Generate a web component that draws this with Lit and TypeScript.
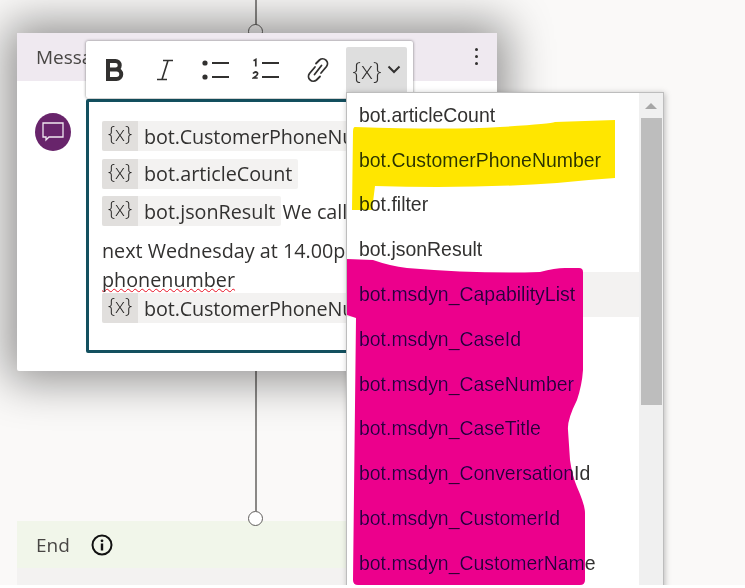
import { LitElement, html, css, svg } from "lit";
import { customElement } from "lit/decorators.js";

const VARS = [
  "bot.articleCount",
  "bot.CustomerPhoneNumber",
  "bot.filter",
  "bot.jsonResult",
  "bot.msdyn_CapabilityList",
  "bot.msdyn_CaseId",
  "bot.msdyn_CaseNumber",
  "bot.msdyn_CaseTitle",
  "bot.msdyn_ConversationId",
  "bot.msdyn_CustomerId",
  "bot.msdyn_CustomerName",
];

/* editor token: {x} tag plus variable name */
const chip = (name: string, tight = false) => html`<span class="chip"
  ><span class="tag">{x}</span><span class="name ${tight ? "tight" : ""}">${name}</span></span
>`;

const boldIcon = svg`<svg width="20" height="24" viewBox="0 0 20 24">
  <path fill="none" stroke="#323130" stroke-width="4" stroke-linejoin="miter" d="M3 3h7.500a4 4 0 0 1 0 8.500H3zM3 11.500h8.500a4.700 4.700 0 0 1 0 9.500H3z"/>
</svg>`;

const italicIcon = svg`<svg width="22" height="24" viewBox="0 0 22 24">
  <path fill="none" stroke="#323130" stroke-width="1.600" d="M10 2.500h10M4 21.500h10M15 2.500 9 21.500"/>
</svg>`;

const bulletIcon = svg`<svg width="28" height="22" viewBox="0 0 28 22">
  <circle cx="3" cy="4" r="2.600" fill="#323130"/>
  <circle cx="3" cy="18" r="2.600" fill="#323130"/>
  <path stroke="#323130" stroke-width="2" d="M10 4h17M10 18h17"/>
</svg>`;

const numberIcon = svg`<svg width="28" height="24" viewBox="0 0 28 24">
  <path fill="none" stroke="#323130" stroke-width="1.700" d="M1.500 2.800 3.800 1.500v7M1 15.500q2.500-2.500 4.200-.8t-3.800 5.300h4.300"/>
  <path stroke="#323130" stroke-width="2" d="M10 5h17M10 19h17"/>
</svg>`;

const linkIcon = svg`<svg width="24" height="26" viewBox="0 0 24 26">
  <g fill="none" stroke="#323130" stroke-width="1.800" stroke-linecap="round">
    <path d="M10 6.500 13.500 3a4.800 4.800 0 0 1 7 6.500l-5.500 6.500"/>
    <path d="M14 19.500 10.500 23a4.800 4.800 0 0 1-7-6.500l5.500-6.500"/>
    <path d="M8.500 17.500 15.500 8.500"/>
  </g>
</svg>`;

@customElement("app-root")
export class AppRoot extends LitElement {
  static styles = css`
    :host {
      display: block;
      width: 745px;
      height: 588px;
      background: #fff;
    }

    .canvas {
      position: relative;
      width: 745px;
      height: 585px;
      overflow: hidden;
      background: #faf9f8;
      font-family: "Open Sans", sans-serif;
      color: #323130;
      isolation: isolate;
    }

    /* connectors */
    .line {
      position: absolute;
      left: 255px;
      width: 2px;
      background: #8a8886;
    }
    .dot {
      position: absolute;
      left: 248px;
      width: 15px;
      height: 15px;
      box-sizing: border-box;
      border: 1px solid #605e5c;
      border-radius: 50%;
      background: #fff;
    }
    .dot.open {
      background: transparent;
    }

    /* message node */
    .card {
      position: absolute;
      left: 17px;
      top: 33px;
      width: 480px;
      height: 338px;
      display: flex;
      flex-direction: column;
      background: #fff;
      border-radius: 2px;
      box-shadow: 0 0 45px 10px rgba(0, 0, 0, 0.42);
    }
    .card-head {
      height: 48px;
      flex: none;
      display: flex;
      align-items: center;
      justify-content: space-between;
      padding: 0 19px 0 19px;
      background: #efe9f0;
      font-size: 19px;
      color: #484644;
    }
    .more {
      display: flex;
      flex-direction: column;
      gap: 4px;
      margin-top: -2px;
    }
    .more i {
      width: 3px;
      height: 3px;
      border-radius: 50%;
      background: #323130;
    }
    .card-body {
      display: flex;
      align-items: flex-start;
      gap: 15px;
      padding: 18px 21px 18px 18px;
      flex: 1;
    }
    .avatar {
      width: 36px;
      height: 38px;
      margin-top: 14px;
      border-radius: 50%;
      background: #68246b;
      flex: none;
      display: flex;
      align-items: center;
      justify-content: center;
    }
    .editor {
      flex: 1;
      height: 254px;
      box-sizing: border-box;
      border: 3px solid #13505f;
      border-radius: 2px;
      padding: 19px 12px 0 13px;
      font-size: 19.750px;
      white-space: nowrap;
      overflow: hidden;
    }
    .row {
      display: flex;
      align-items: center;
      height: 30px;
      margin-bottom: 7.500px;
    }
    .row.text {
      margin-bottom: 0;
    }
    .after {
      margin-left: 1px;
    }
    .chip {
      display: inline-flex;
      height: 30px;
      align-items: center;
      background: #f3f2f1;
      border-radius: 2px;
      padding-right: 6px;
    }
    .name.tight {
      letter-spacing: -0.120px;
    }
    .tag {
      width: 36px;
      height: 30px;
      display: flex;
      align-items: center;
      justify-content: center;
      background: #e1dfdd;
      border-radius: 2px 0 0 2px;
      margin-right: 6px;
      font-size: 20px;
      font-weight: 300;
      color: #201f1e;
      padding-bottom: 5px;
      box-sizing: border-box;
    }
    .squiggle {
      text-decoration: underline wavy #e81123 1.400px;
      text-decoration-skip-ink: none;
      text-underline-offset: 1px;
    }

    /* rich text toolbar */
    .toolbar {
      position: absolute;
      left: 86px;
      top: 41px;
      width: 327px;
      height: 57px;
      box-sizing: border-box;
      display: flex;
      align-items: center;
      background: #fff;
      border-radius: 2px;
      box-shadow: 0 0 3px rgba(0, 0, 0, 0.5);
      padding: 0 6px 0 19px;
    }
    .tool {
      display: flex;
      align-items: center;
      justify-content: center;
    }
    .tool.b {
      width: 20px;
      margin-right: 28px;
    }
    .tool.i {
      width: 22px;
      margin-right: 27px;
    }
    .tool.ul {
      width: 28px;
      margin-right: 22px;
    }
    .tool.ol {
      width: 28px;
      margin-right: 26px;
    }
    .tool.link {
      width: 24px;
      margin-right: 16px;
    }
    .var-btn {
      width: 61px;
      height: 51px;
      align-self: flex-end;
      box-sizing: border-box;
      background: #dedede;
      border-radius: 2px 2px 0 0;
      display: flex;
      align-items: center;
      justify-content: center;
      gap: 6px;
      font-size: 24px;
      font-weight: 300;
      padding: 0 0 6px 1px;
    }

    /* variable picker */
    .menu {
      position: absolute;
      left: 346px;
      top: 92px;
      width: 318px;
      height: 500px;
      display: flex;
      background: #fff;
      border: 1px solid #bdbdbd;
      box-sizing: border-box;
      box-shadow: 1px 1px 6px rgba(0, 0, 0, 0.25);
      font-family: "Liberation Sans", Arial, sans-serif;
      overflow: hidden;
    }
    .list {
      flex: 1;
      min-width: 0;
    }
    .item {
      height: 44.800px;
      display: flex;
      align-items: center;
      padding-left: 12px;
      font-size: 19.450px;
      color: #323130;
    }
    .item.hover {
      background: #f3f2f1;
    }
    .scroll {
      width: 24px;
      flex: none;
      background: #f0f0f0;
      display: flex;
      flex-direction: column;
      align-items: center;
    }
    .arrow {
      margin-top: 10px;
      width: 0;
      height: 0;
      border-left: 6px solid transparent;
      border-right: 6px solid transparent;
      border-bottom: 6px solid #a6a6a6;
    }
    .thumb {
      width: 21px;
      height: 287px;
      margin-top: 9px;
      background: #bdbdbd;
    }

    /* end node */
    .end {
      position: absolute;
      left: 17px;
      top: 521px;
      width: 480px;
      height: 64px;
      display: flex;
      flex-direction: column;
      background: #f3f2f1;
    }
    .end-head {
      height: 47px;
      display: flex;
      align-items: center;
      gap: 21px;
      padding-left: 19px;
      background: #f1f6ea;
      font-size: 19px;
      color: #484644;
    }

    /* marker strokes drawn over the screenshot */
    .marker {
      position: absolute;
      left: 0;
      top: 0;
      mix-blend-mode: darken;
      pointer-events: none;
    }
  `;

  render() {
    return html`
      <div class="canvas">
        <div class="line" style="top:0;height:25px"></div>
        <div class="dot open" style="top:24px"></div>
        <div class="line" style="top:371px;height:140px"></div>

        <div class="end">
          <div class="end-head">
            <span>End</span>
            <svg width="22" height="22" viewBox="0 0 22 22">
              <circle cx="11" cy="11" r="9.500" fill="none" stroke="#111" stroke-width="2" />
              <rect x="9.800" y="9.500" width="2.400" height="7" fill="#111" />
              <circle cx="11" cy="6.800" r="1.400" fill="#111" />
            </svg>
          </div>
        </div>
        <div class="dot" style="top:511px"></div>

        <div class="card">
          <div class="card-head">
            <span>Message</span>
            <span class="more"><i></i><i></i><i></i></span>
          </div>
          <div class="card-body">
            <div class="avatar">
              <svg width="22" height="20" viewBox="0 0 22 20">
                <path
                  fill="none"
                  stroke="#efe6f0"
                  stroke-width="1.300"
                  d="M1 1h20v14H7l-3 3v-3H1z"
                />
              </svg>
            </div>
            <div class="editor">
              <div class="row">${chip("bot.CustomerPhoneNu", true)}</div>
              <div class="row">${chip("bot.articleCount")}</div>
              <div class="row">${chip("bot.jsonResult")}<span class="after">We call</span></div>
              <div class="row text" style="margin-top:9px">next Wednesday at 14.00p</div>
              <div class="row text" style="margin-top:-1px"><span class="squiggle">phonenumber</span></div>
              <div class="row" style="margin-top:-1px">${chip("bot.CustomerPhoneNu", true)}</div>
            </div>
          </div>
        </div>

        <div class="toolbar">
          <span class="tool b">${boldIcon}</span>
          <span class="tool i">${italicIcon}</span>
          <span class="tool ul">${bulletIcon}</span>
          <span class="tool ol">${numberIcon}</span>
          <span class="tool link">${linkIcon}</span>
          <span class="var-btn">
            <span>{x}</span>
            <svg width="14" height="9" viewBox="0 0 14 9">
              <path fill="none" stroke="#323130" stroke-width="2" d="M1.500 1.500 7 7l5.500-5.500" />
            </svg>
          </span>
        </div>

        <div class="menu">
          <div class="list">
            ${VARS.map(
              (v, i) => html`<div class="item ${i === 4 ? "hover" : ""}">${v}</div>`
            )}
          </div>
          <div class="scroll">
            <div class="arrow"></div>
            <div class="thumb"></div>
          </div>
        </div>

        <svg class="marker" width="745" height="585" viewBox="0 0 745 585">
          <path
            fill="#ffe600"
            d="M355 127 Q450 130 500 127 T555 122 L615 120 L615 178 Q585 180 557 183 Q470 189 375 186 L372 210 L352 210 L353 132 Q353 127 355 127Z"
          />
          <path
            fill="#ec008c"
            d="M347 259 L373 260 Q390 266 407 268 Q480 274 540 272 Q555 268 565 268 L579 268 Q583 268 583 272 L583 370 Q582 385 577 400 Q567 420 568 430 L570 460 Q572 475 577 487 Q585 505 585 513 L585 580 Q585 585 580 585 L358 585 Q353 585 353 580 L356 318 L347 315Z"
          />
        </svg>
      </div>
    `;
  }
}
